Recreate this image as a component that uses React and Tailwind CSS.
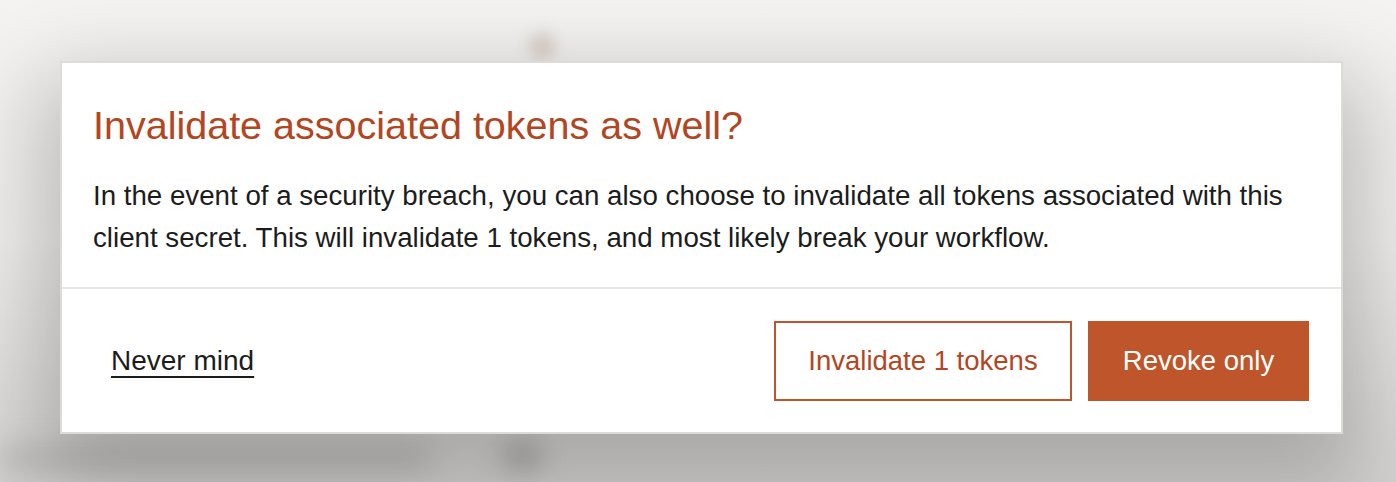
export default function App() {
  return (
    <div
      className="relative h-[482px] w-full overflow-hidden bg-gradient-to-b from-[#f4f3f1] via-[#eeedeb] to-[#d4d3d1] pl-[60px] pt-[61px]"
      style={{ fontFamily: '"Liberation Sans", Arial, sans-serif' }}
    >
      {/* blurred page behind the modal */}
      <div className="absolute left-[528px] top-[32px] h-[28px] w-[28px] rounded-full bg-[#ddd3cc] blur-[7px]" />
      <div className="absolute left-[0px] top-[446px] h-[26px] w-[430px] rounded bg-[#bdbcba] blur-[14px]" />
      <div className="absolute left-[500px] top-[440px] h-[34px] w-[44px] rounded-full bg-[#b5b4b2] blur-[12px]" />

      <div className="relative w-[1283px] border-2 border-[#dcdbd9] bg-white shadow-[0_36px_80px_20px_rgba(0,0,0,0.22)]">
        <div className="pb-[28px] pl-[31px] pr-[32px] pt-[38px]">
          <h2 className="text-[39.5px] leading-[48px] text-[#b3461f]">
            Invalidate associated tokens as well?
          </h2>
          <p className="mt-[26px] text-[27.7px] leading-[42px] text-[#1c1c1c]">
            In the event of a security breach, you can also choose to invalidate all tokens associated with this
            client secret. This will invalidate 1 tokens, and most likely break your workflow.
          </p>
        </div>

        <div className="flex items-center justify-between border-t-2 border-[#ebe7e3] pb-[31px] pl-[31px] pr-[32px] pt-[32px]">
          <button className="ml-[18px] text-[28px] text-[#1c1c1c] underline decoration-2 underline-offset-[6px]">
            Never mind
          </button>
          <div className="flex gap-4">
            <button className="h-[80px] w-[298px] border-2 border-[#c0542b] bg-white text-[27.5px] text-[#b3461f]">
              Invalidate 1 tokens
            </button>
            <button className="h-[80px] w-[221px] bg-[#bf552b] text-[27.5px] text-white">
              Revoke only
            </button>
          </div>
        </div>
      </div>
    </div>
  );
}
